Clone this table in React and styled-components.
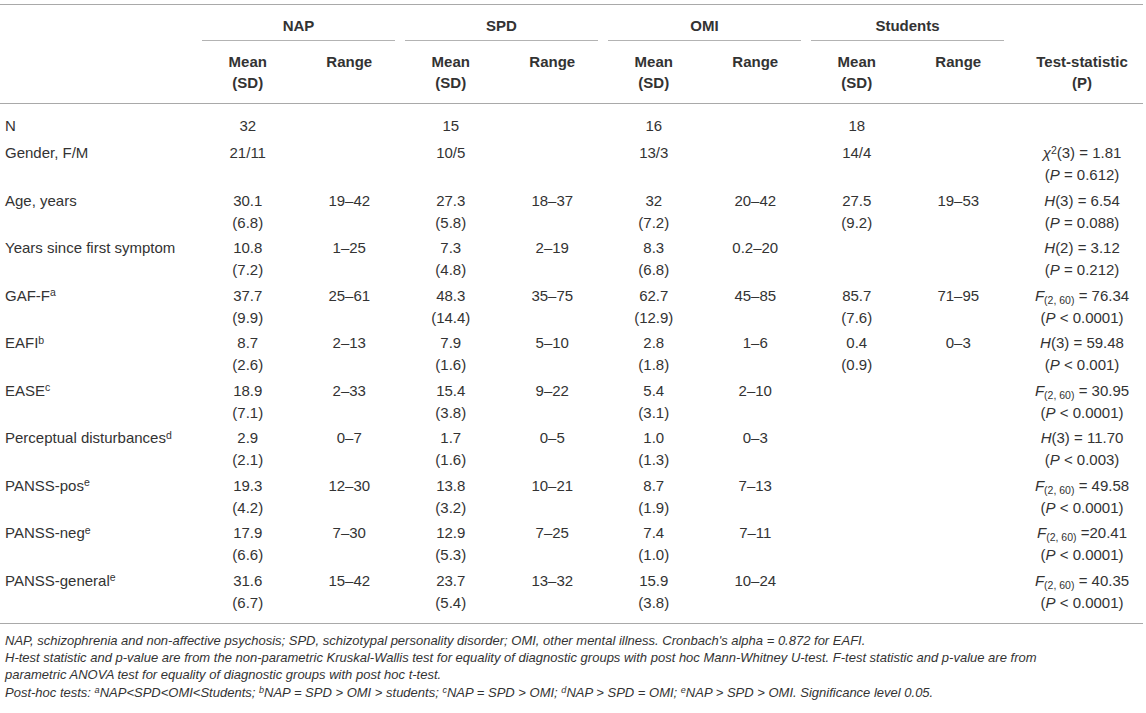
import React from 'react';
import styled, { createGlobalStyle } from 'styled-components';

const GlobalStyle = createGlobalStyle`
  body {
    margin: 0;
    background: #ffffff;
    color: #333333;
    font-family: "Liberation Sans", Arial, sans-serif;
  }
`;

const Page = styled.div`
  padding-top: 4px;
  width: 1143px;
`;

const Table = styled.table`
  width: 1143px;
  table-layout: fixed;
  border-collapse: collapse;
  border-top: 1px solid #a9a9a9;
  border-bottom: 1px solid #a9a9a9;
  font-size: 15px;
`;

const GroupHead = styled.th`
  padding: 9.5px 5px 0;
  font-weight: bold;
  text-align: center;
  line-height: 21px;
`;

const GroupLabel = styled.div`
  padding-bottom: 4.5px;
  border-bottom: 1px solid #b3b3b3;
`;

const SubHead = styled.th`
  padding: 9.5px 5px 10.5px ${({ $stat }) => ($stat ? '17px' : '5px')};
  font-weight: bold;
  text-align: center;
  vertical-align: bottom;
  line-height: 21px;
  border-bottom: 1px solid #a9a9a9;
`;

const Cell = styled.td`
  padding: ${({ $first, $last }) =>
    `${$first ? '11px' : '1.75px'} 5px ${$last ? '9px' : $first ? '3.5px' : '1.75px'}`};
  padding-left: ${({ $stat }) => ($stat ? '17px' : '5px')};
  line-height: 22px;
  vertical-align: top;
  text-align: ${({ $label }) => ($label ? 'left' : 'center')};
  white-space: nowrap;
`;

const Line = styled.div`
  display: block;
`;

const Sup = styled.span`
  position: relative;
  top: -0.45em;
  font-size: 0.7em;
  line-height: 0;
`;

const Sub = styled.span`
  position: relative;
  top: 0.3em;
  font-size: 0.7em;
  line-height: 0;
`;

const Notes = styled.div`
  padding: 8px 0 0 5px;
  font-size: 13px;
  font-style: italic;
  line-height: 17.3px;
  color: #333333;
`;

const Note = styled.div`
  white-space: nowrap;
`;

const groups = ['NAP', 'SPD', 'OMI', 'Students'];

const MeanSd = ({ mean, sd }) => (
  <>
    <Line>{mean}</Line>
    {sd && <Line>({sd})</Line>}
  </>
);

const Stat = ({ name, df, sub, value, p }) => (
  <>
    <Line>
      {name === 'chi' ? (
        <>
          <i>χ</i>
          <Sup>2</Sup>
        </>
      ) : (
        <i>{name}</i>
      )}
      {sub ? <Sub>{sub}</Sub> : df}
      {value}
    </Line>
    <Line>
      (<i>P</i> {p})
    </Line>
  </>
);

const rows = [
  { label: 'N', cells: [['32'], null, ['15'], null, ['16'], null, ['18'], null], stat: null },
  {
    label: 'Gender, F/M',
    cells: [['21/11'], null, ['10/5'], null, ['13/3'], null, ['14/4'], null],
    stat: { name: 'chi', df: '(3)', value: ' = 1.81', p: '= 0.612' },
  },
  {
    label: 'Age, years',
    cells: [['30.1', '6.8'], '19–42', ['27.3', '5.8'], '18–37', ['32', '7.2'], '20–42', ['27.5', '9.2'], '19–53'],
    stat: { name: 'H', df: '(3)', value: ' = 6.54', p: '= 0.088' },
  },
  {
    label: 'Years since first symptom',
    cells: [['10.8', '7.2'], '1–25', ['7.3', '4.8'], '2–19', ['8.3', '6.8'], '0.2–20', null, null],
    stat: { name: 'H', df: '(2)', value: ' = 3.12', p: '= 0.212' },
  },
  {
    label: 'GAF-F',
    sup: 'a',
    cells: [['37.7', '9.9'], '25–61', ['48.3', '14.4'], '35–75', ['62.7', '12.9'], '45–85', ['85.7', '7.6'], '71–95'],
    stat: { name: 'F', sub: '(2, 60)', value: ' = 76.34', p: '< 0.0001' },
  },
  {
    label: 'EAFI',
    sup: 'b',
    cells: [['8.7', '2.6'], '2–13', ['7.9', '1.6'], '5–10', ['2.8', '1.8'], '1–6', ['0.4', '0.9'], '0–3'],
    stat: { name: 'H', df: '(3)', value: ' = 59.48', p: '< 0.001' },
  },
  {
    label: 'EASE',
    sup: 'c',
    cells: [['18.9', '7.1'], '2–33', ['15.4', '3.8'], '9–22', ['5.4', '3.1'], '2–10', null, null],
    stat: { name: 'F', sub: '(2, 60)', value: ' = 30.95', p: '< 0.0001' },
  },
  {
    label: 'Perceptual disturbances',
    sup: 'd',
    cells: [['2.9', '2.1'], '0–7', ['1.7', '1.6'], '0–5', ['1.0', '1.3'], '0–3', null, null],
    stat: { name: 'H', df: '(3)', value: ' = 11.70', p: '< 0.003' },
  },
  {
    label: 'PANSS-pos',
    sup: 'e',
    cells: [['19.3', '4.2'], '12–30', ['13.8', '3.2'], '10–21', ['8.7', '1.9'], '7–13', null, null],
    stat: { name: 'F', sub: '(2, 60)', value: ' = 49.58', p: '< 0.0001' },
  },
  {
    label: 'PANSS-neg',
    sup: 'e',
    cells: [['17.9', '6.6'], '7–30', ['12.9', '5.3'], '7–25', ['7.4', '1.0'], '7–11', null, null],
    stat: { name: 'F', sub: '(2, 60)', value: ' =20.41', p: '< 0.0001' },
  },
  {
    label: 'PANSS-general',
    sup: 'e',
    cells: [['31.6', '6.7'], '15–42', ['23.7', '5.4'], '13–32', ['15.9', '3.8'], '10–24', null, null],
    stat: { name: 'F', sub: '(2, 60)', value: ' = 40.35', p: '< 0.0001' },
  },
];

const App = () => (
  <Page>
    <GlobalStyle />
    <Table>
      <colgroup>
        <col style={{ width: 197 }} />
        {Array.from({ length: 8 }).map((_, i) => (
          <col key={i} style={{ width: 101.5 }} />
        ))}
        <col style={{ width: 134 }} />
      </colgroup>
      <thead>
        <tr>
          <SubHead rowSpan={2} />
          {groups.map((g) => (
            <GroupHead key={g} colSpan={2}>
              <GroupLabel>{g}</GroupLabel>
            </GroupHead>
          ))}
          <SubHead rowSpan={2} $stat>
            Test-statistic
            <br />
            (P)
          </SubHead>
        </tr>
        <tr>
          {groups.map((g) => (
            <React.Fragment key={g}>
              <SubHead>
                Mean
                <br />
                (SD)
              </SubHead>
              <SubHead style={{ verticalAlign: 'top' }}>Range</SubHead>
            </React.Fragment>
          ))}
        </tr>
      </thead>
      <tbody>
        {rows.map((r, ri) => {
          const first = ri === 0;
          const last = ri === rows.length - 1;
          return (
            <tr key={r.label}>
              <Cell $label $first={first} $last={last}>
                {r.label}
                {r.sup && <Sup>{r.sup}</Sup>}
              </Cell>
              {r.cells.map((c, ci) => (
                <Cell key={ci} $first={first} $last={last}>
                  {Array.isArray(c) ? <MeanSd mean={c[0]} sd={c[1]} /> : c}
                </Cell>
              ))}
              <Cell $stat $first={first} $last={last}>
                {r.stat && <Stat {...r.stat} />}
              </Cell>
            </tr>
          );
        })}
      </tbody>
    </Table>
    <Notes>
      <Note>
        NAP, schizophrenia and non-affective psychosis; SPD, schizotypal personality disorder; OMI, other mental
        illness. Cronbach's alpha = 0.872 for EAFI.
      </Note>
      <Note>
        H-test statistic and p-value are from the non-parametric Kruskal-Wallis test for equality of diagnostic
        groups with post hoc Mann-Whitney U-test. F-test statistic and p-value are from
      </Note>
      <Note>parametric ANOVA test for equality of diagnostic groups with post hoc t-test.</Note>
      <Note>
        Post-hoc tests: <Sup>a</Sup>NAP&lt;SPD&lt;OMI&lt;Students; <Sup>b</Sup>NAP = SPD &gt; OMI &gt; students;{' '}
        <Sup>c</Sup>NAP = SPD &gt; OMI; <Sup>d</Sup>NAP &gt; SPD = OMI; <Sup>e</Sup>NAP &gt; SPD &gt; OMI.
        Significance level 0.05.
      </Note>
    </Notes>
  </Page>
);

export default App;
